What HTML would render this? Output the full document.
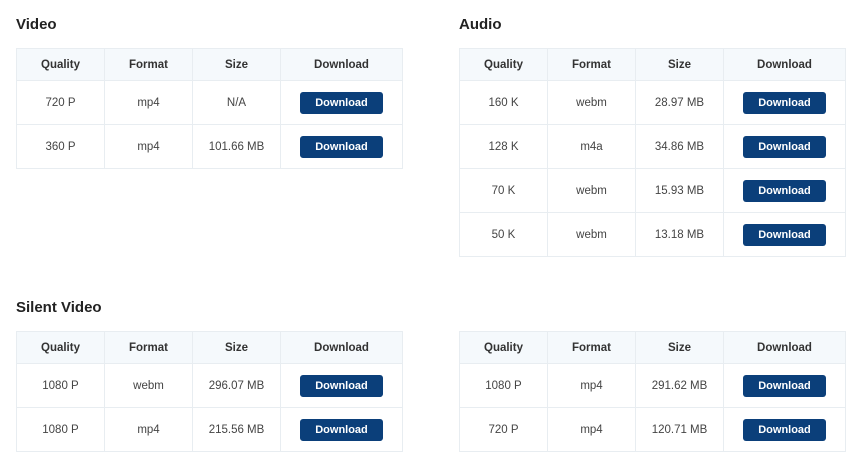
<!DOCTYPE html>
<html><head><style>
body{margin:0;width:850px;height:456px;overflow:hidden;background:#fff;font-family:"Liberation Sans",sans-serif;position:relative}
h2{position:absolute;margin:0;font-size:15px;font-weight:bold;color:#222}
table{position:absolute;border-collapse:collapse;table-layout:fixed;width:387px}
td,th{border:1px solid #e8edf1;text-align:center;font-size:11.5px;color:#444;padding:0}
th{height:31px;background:#f5f9fc;font-weight:bold;color:#333}
td{height:43px}
col.a{width:88px}col.d{width:122px}
.b{display:inline-block;width:83px;height:22px;line-height:22px;background:#0b3f7a;color:#fff;font-weight:bold;font-size:11px;border-radius:3px}
</style></head><body>
<h2 style="left:16px;top:16px">Video</h2>
<h2 style="left:459px;top:16px">Audio</h2>
<h2 style="left:16px;top:299px">Silent Video</h2>
<table style="left:16px;top:48px"><colgroup><col class="a"><col class="a"><col class="a"><col class="d"></colgroup>
<tr><th>Quality</th><th>Format</th><th>Size</th><th>Download</th></tr>
<tr><td>720 P</td><td>mp4</td><td>N/A</td><td><span class="b">Download</span></td></tr>
<tr><td>360 P</td><td>mp4</td><td>101.66 MB</td><td><span class="b">Download</span></td></tr>
</table>
<table style="left:459px;top:48px"><colgroup><col class="a"><col class="a"><col class="a"><col class="d"></colgroup>
<tr><th>Quality</th><th>Format</th><th>Size</th><th>Download</th></tr>
<tr><td>160 K</td><td>webm</td><td>28.97 MB</td><td><span class="b">Download</span></td></tr>
<tr><td>128 K</td><td>m4a</td><td>34.86 MB</td><td><span class="b">Download</span></td></tr>
<tr><td>70 K</td><td>webm</td><td>15.93 MB</td><td><span class="b">Download</span></td></tr>
<tr><td>50 K</td><td>webm</td><td>13.18 MB</td><td><span class="b">Download</span></td></tr>
</table>
<table style="left:16px;top:331px"><colgroup><col class="a"><col class="a"><col class="a"><col class="d"></colgroup>
<tr><th>Quality</th><th>Format</th><th>Size</th><th>Download</th></tr>
<tr><td>1080 P</td><td>webm</td><td>296.07 MB</td><td><span class="b">Download</span></td></tr>
<tr><td>1080 P</td><td>mp4</td><td>215.56 MB</td><td><span class="b">Download</span></td></tr>
</table>
<table style="left:459px;top:331px"><colgroup><col class="a"><col class="a"><col class="a"><col class="d"></colgroup>
<tr><th>Quality</th><th>Format</th><th>Size</th><th>Download</th></tr>
<tr><td>1080 P</td><td>mp4</td><td>291.62 MB</td><td><span class="b">Download</span></td></tr>
<tr><td>720 P</td><td>mp4</td><td>120.71 MB</td><td><span class="b">Download</span></td></tr>
</table>
</body></html>
